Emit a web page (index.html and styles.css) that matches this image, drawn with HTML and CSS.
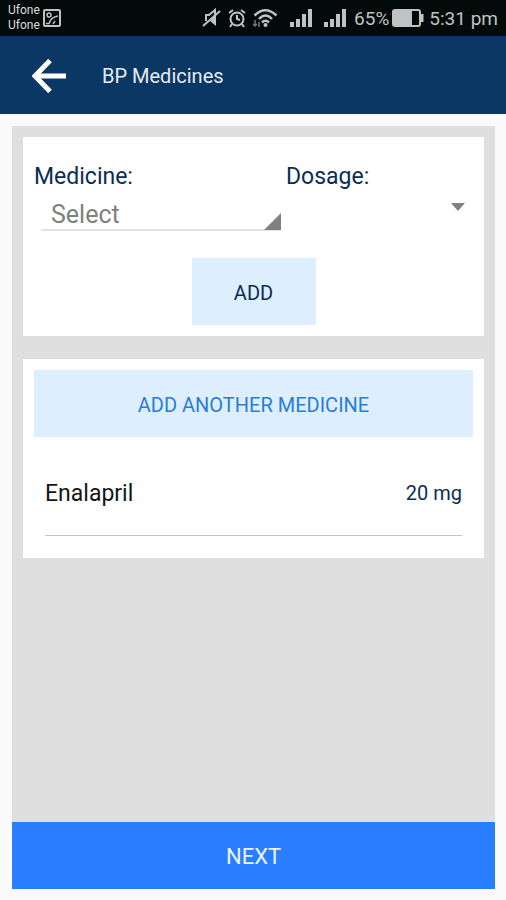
FILE: index.html
```html
<!DOCTYPE html>
<html lang="en">
<head>
<meta charset="utf-8">
<meta name="viewport" content="width=device-width, initial-scale=1">
<title>BP Medicines</title>
<link rel="stylesheet" href="styles.css">
</head>
<body>
<div class="status-bar">
  <div class="carriers"><span>Ufone</span><span>Ufone</span></div>
  <svg class="picture-icon" width="18" height="18" viewBox="0 0 18 18" fill="none" stroke="currentColor" stroke-width="2">
    <rect x="1" y="1" width="16" height="16" rx="1"/>
    <circle cx="6" cy="6" r="2" stroke-width="1.5"/>
    <path d="M3 14.500h3Q8 8 15 7M10 15l2-3" stroke-width="1.5"/>
  </svg>
  <div class="indicators">
    <svg width="19" height="20" viewBox="0 0 19 20" fill="none" stroke="currentColor" stroke-width="2">
      <path d="M3 7h4l6-5v6M4 13V7"/>
      <path d="M8 13l6-6v11z" fill="currentColor" stroke="none"/>
      <path d="M1 18L18 3"/>
    </svg>
    <svg class="alarm-icon" width="18" height="20" viewBox="0 0 18 20" fill="none" stroke="currentColor" stroke-width="2">
      <circle cx="9" cy="11" r="6.500"/>
      <path d="M9 7v4l3 1M1 5l4-3M17 5l-4-3M4 16l-2 3M14 16l2 3"/>
    </svg>
    <svg class="wifi-icon" width="25" height="20" viewBox="0 0 25 20" fill="none" stroke="currentColor" stroke-width="2.5">
      <path d="M1.500 7.500Q12.500-3 23.500 7.500M6 11Q12.500 4 19 11M9 14.500Q12.500 11 16 14.500"/>
      <circle cx="12.500" cy="17" r="2" fill="currentColor" stroke="none"/>
      <path d="M2 12v6M0 16l2 2 2-2M6 19v-5" stroke-width="1.500" opacity=".6"/>
    </svg>
    <svg class="signal-icon" width="22" height="18" viewBox="0 0 22 18" fill="currentColor">
      <path d="M0 13h4v5H0zM6 10h4v8H6zM12 5h4v13h-4zM18 0h4v18h-4z"/>
    </svg>
    <svg class="signal-icon" width="22" height="18" viewBox="0 0 22 18" fill="currentColor">
      <path d="M0 13h4v5H0zM6 10h4v8H6zM12 5h4v13h-4zM18 0h4v18h-4z"/>
    </svg>
    <span>65%</span>
    <svg class="battery-icon" width="32" height="18" viewBox="0 0 32 18" fill="none" stroke="currentColor" stroke-width="2">
      <rect x="1" y="1" width="27" height="16" rx="2"/>
      <path d="M2 2h18v14H2z" fill="currentColor" stroke="none"/>
      <path d="M30 5v8" stroke-width="3"/>
    </svg>
    <span>5:31 pm</span>
  </div>
</div>
<header class="app-bar">
  <button class="back" type="button" aria-label="Back">
    <svg width="34" height="34" viewBox="0 0 34 34" fill="none" stroke="currentColor" stroke-width="5">
      <path d="M34 17H3M18 1.500L3 17 18 32.500"/>
    </svg>
  </button>
  <h1>BP Medicines</h1>
</header>
<main class="page">
  <div class="panel">
    <form class="card entry">
      <div class="fields">
        <div class="field">
          <label for="medicine">Medicine:</label>
          <div class="picker lined">
            <select id="medicine"><option>Select</option></select>
            <svg class="corner" width="17" height="17" viewBox="0 0 17 17"><path d="M17 0v17H0z" fill="currentColor"/></svg>
          </div>
        </div>
        <div class="field">
          <label for="dosage">Dosage:</label>
          <div class="picker">
            <select id="dosage"><option></option></select>
            <svg class="caret" width="14" height="8" viewBox="0 0 14 8"><path d="M0 0h14L7 8z" fill="currentColor"/></svg>
          </div>
        </div>
      </div>
      <button class="button add" type="button">ADD</button>
    </form>
    <section class="card list">
      <button class="button another" type="button">ADD ANOTHER MEDICINE</button>
      <ul class="medicines">
        <li><span>Enalapril</span><span class="dose">20 mg</span></li>
      </ul>
    </section>
  </div>
  <button class="button next" type="button">NEXT</button>
</main>
</body>
</html>
```
FILE: styles.css
```css
* {
  box-sizing: border-box;
}

body {
  margin: 0;
  min-height: 100vh;
  display: flex;
  flex-direction: column;
  background: #fafafa;
  color: #0b2d55;
  font-family: Roboto, "Liberation Sans", sans-serif;
  font-size: 20px;
}

button,
select {
  margin: 0;
  padding: 0;
  border: 0;
  border-radius: 0;
  font: inherit;
  color: inherit;
}

svg {
  display: block;
  flex: none;
}

.status-bar {
  display: flex;
  align-items: center;
  height: 36px;
  padding: 0 8px;
  background: #020a0a;
  color: #bfc3c3;
}

.carriers {
  display: flex;
  flex-direction: column;
  font-size: 12px;
  line-height: 15px;
  color: #dddddd;
}

.picture-icon {
  margin-left: 3px;
}

.indicators {
  display: flex;
  align-items: center;
  margin-left: auto;
  font-size: 19px;
}

.alarm-icon,
.wifi-icon {
  margin-left: 7px;
}

.signal-icon {
  margin-left: 12px;
}

.signal-icon + span {
  margin-left: 8px;
}

.battery-icon {
  margin: 0 5px 0 3px;
}

.app-bar {
  display: flex;
  align-items: center;
  gap: 36px;
  height: 78px;
  padding: 2px 32px 0;
  background: #0a3764;
  color: #ffffff;
}

.back {
  background: none;
}

h1 {
  margin: 0;
  font-size: 20px;
  font-weight: 400;
  color: #e6ecf2;
}

.page {
  flex: 1;
  display: flex;
  flex-direction: column;
  padding: 12px 11px 11px 12px;
}

.panel {
  flex: 1;
  display: flex;
  flex-direction: column;
  gap: 23px;
  padding: 11px;
  background: #dfdfdf;
}

.card {
  padding: 11px;
  background: #ffffff;
}

.entry {
  display: flex;
  flex-direction: column;
  align-items: center;
  gap: 27px;
}

.list {
  padding-bottom: 22px;
}

.fields {
  display: grid;
  grid-template-columns: 252fr 187fr;
  width: 100%;
  padding-top: 15px;
}

.field {
  min-width: 0;
  font-size: 23px;
  line-height: 28px;
}

label {
  display: block;
}

.picker {
  position: relative;
  height: 40px;
  color: #808080;
}

.lined {
  margin: 0 5px 0 7px;
  border-bottom: 2px solid #e2e2e2;
}

select {
  display: block;
  width: 100%;
  height: 100%;
  padding: 10px 0 0 10px;
  appearance: none;
  background: none;
  font-size: 25px;
}

.corner {
  position: absolute;
  right: 0;
  bottom: -1px;
}

.caret {
  position: absolute;
  right: 8px;
  top: 12px;
}

.button {
  height: 67px;
  padding-top: 2px;
  background: #ddeffe;
}

.add {
  width: 124px;
}

.another {
  width: 100%;
  color: #2b7cd8;
}

.medicines {
  margin: 0;
  padding: 0 11px;
  list-style: none;
}

.medicines li {
  display: flex;
  align-items: center;
  justify-content: space-between;
  height: 99px;
  padding-top: 14px;
  border-bottom: 1px solid #c4c4c4;
  font-size: 23px;
  color: #151515;
}

.medicines .dose {
  font-size: 20px;
  color: #0b2d55;
}

.next {
  background: #297eff;
  color: #eaf3ff;
  font-size: 22px;
}
```
